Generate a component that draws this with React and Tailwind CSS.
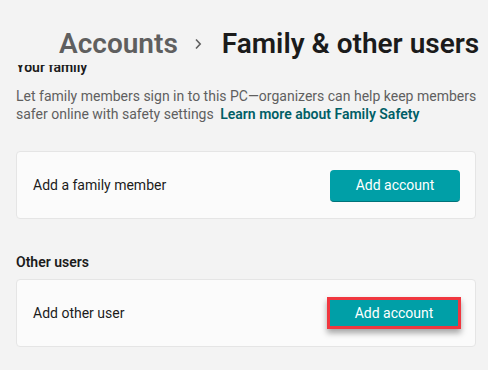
export default function App() {
  return (
    <div className="w-[488px] h-[370px] overflow-hidden bg-[#f3f3f3] text-[#1b1b1b]" style={{ fontFamily: 'Roboto, "Noto Sans", sans-serif' }}>
      <div className="flex items-center pl-[59px] pt-[24px] text-[28px] leading-[40px] whitespace-nowrap">
        <span className="text-[#5f5f5f] font-semibold">Accounts</span>
        <svg className="ml-[16px] mr-[20px]" width="8" height="12" viewBox="0 0 8 12" fill="none">
          <path d="M2 1.5l4.2 4.5-4.2 4.5" stroke="#5f5f5f" strokeWidth="1.6" />
        </svg>
        <span className="font-semibold">Family &amp; other users</span>
      </div>
      <div className="ml-[16px] mt-[1px] h-[11px] overflow-hidden">
        <div className="mt-[-8px] text-[14px] leading-[20px] font-semibold">Your family</div>
      </div>
      <p className="ml-[16px] w-[464px] mt-[11px] text-[14px] leading-[18px] text-[#5f5f5f]">
        Let family members sign in to this PC—organizers can help keep members safer online with safety settings{" "}
        <span className="ml-[3px] font-semibold text-[#005e66]">Learn more about Family Safety</span>
      </p>
      <div className="ml-[16px] w-[460px] mt-[28px] h-[68px] flex items-center justify-between rounded-[4px] border border-[#e5e5e5] bg-[#fbfbfb] pl-[16px] pr-[15px]">
        <span className="text-[14px]">Add a family member</span>
        <button className="w-[130px] h-[32px] mt-[2px] rounded-[4px] bg-[#009fa7] border-b border-[#00737a] text-white text-[14px]">Add account</button>
      </div>
      <div className="ml-[16px] mt-[33px] text-[14px] leading-[20px] font-semibold">Other users</div>
      <div className="ml-[16px] w-[460px] mt-[7px] h-[68px] flex items-center justify-between rounded-[4px] border border-[#e5e5e5] bg-[#fbfbfb] pl-[16px] pr-[14px]">
        <span className="text-[14px]">Add other user</span>
        <div className="border-[3px] border-[#f0373f] shadow-[0_4px_6px_rgba(0,0,0,0.35)]">
          <button className="block w-[128px] h-[26px] bg-[#009fa7] text-white text-[14px]">Add account</button>
        </div>
      </div>
    </div>
  );
}
